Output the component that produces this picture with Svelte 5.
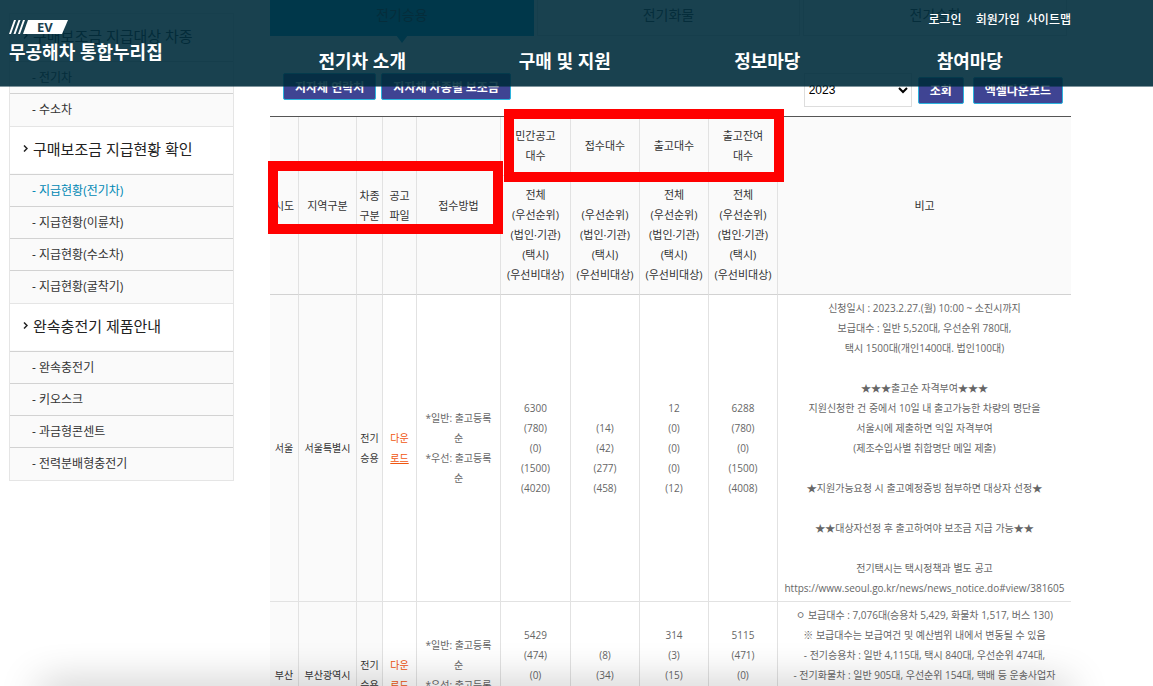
<script lang="ts">
interface MenuGroup {
    title: string;
    items: string[];
}

interface Region {
    sido: string;
    name: string;
    counts: string[][];
    notes: string[];
}

const mainMenu = ['전기차 소개', '구매 및 지원', '정보마당', '참여마당'];
const tabs = ['전기승용', '전기화물', '전기승합'];
const countHeads = [['민간공고', '대수'], ['접수대수'], ['출고대수'], ['출고잔여', '대수']];
const active = '지급현황(전기차)';

const sideMenu: MenuGroup[] = [
    { title: '구매보조금 지급대상 차종', items: ['전기차', '수소차'] },
    {
        title: '구매보조금 지급현황 확인',
        items: ['지급현황(전기차)', '지급현황(이륜차)', '지급현황(수소차)', '지급현황(굴착기)']
    },
    {
        title: '완속충전기 제품안내',
        items: ['완속충전기', '키오스크', '과금형콘센트', '전력분배형충전기']
    }
];

const regions: Region[] = [
    {
        sido: '서울',
        name: '서울특별시',
        counts: [
            ['6300', '(780)', '(0)', '(1500)', '(4020)'],
            ['', '(14)', '(42)', '(277)', '(458)'],
            ['12', '(0)', '(0)', '(0)', '(12)'],
            ['6288', '(780)', '(0)', '(1500)', '(4008)']
        ],
        notes: [
            '신청일시 : 2023.2.27.(월) 10:00 ~ 소진시까지',
            '보급대수 : 일반 5,520대, 우선순위 780대,',
            '택시 1500대(개인1400대. 법인100대)',
            '',
            '★★★출고순 자격부여★★★',
            '지원신청한 건 중에서 10일 내 출고가능한 차량의 명단을',
            '서울시에 제출하면 익일 자격부여',
            '(제조수입사별 취합명단 메일 제출)',
            '',
            '★지원가능요청 시 출고예정증빙 첨부하면 대상자 선정★',
            '',
            '★★대상자선정 후 출고하여야 보조금 지급 가능★★',
            '',
            '전기택시는 택시정책과 별도 공고',
            'https://www.seoul.go.kr/news/news_notice.do#view/381605'
        ]
    },
    {
        sido: '부산',
        name: '부산광역시',
        counts: [
            ['5429', '(474)', '(0)', '', ''],
            ['', '(8)', '(34)', '', ''],
            ['314', '(3)', '(15)', '', ''],
            ['5115', '(471)', '(0)', '', '']
        ],
        notes: [
            'ㅇ 보급대수 : 7,076대(승용차 5,429, 화물차 1,517, 버스 130)',
            '※ 보급대수는 보급여건 및 예산범위 내에서 변동될 수 있음',
            '- 전기승용차 : 일반 4,115대, 택시 840대, 우선순위 474대,',
            '- 전기화물차 : 일반 905대, 우선순위 154대, 택배 등 운송사업자',
            '',
            '',
            ''
        ]
    }
];
</script>

{#snippet lines(list: string[])}
    {#each list as line}
        <span class="line">{line}</span>
    {/each}
{/snippet}

<div class="page">
    <header class="site-header">
        <a class="logo" href="#home">
            <svg width="60" height="15" viewBox="0 0 60 15" aria-hidden="true">
                <path d="M5 0h2L2 14H0zM9.500 0h2l-5 14h-2zM14 0h2l-5 14H9z" fill="#fff" />
                <path d="M19 0h40l-6 14H14z" fill="#fff" />
                <text x="28" y="12" class="logo-ev">EV</text>
            </svg>
            <strong>무공해차 통합누리집</strong>
        </a>
        <div class="header-right">
            <ul class="util">
                <li><a href="#login">로그인</a></li>
                <li><a href="#join">회원가입</a></li>
                <li><a href="#sitemap">사이트맵</a></li>
            </ul>
            <nav class="main-nav">
                {#each mainMenu as item}
                    <a href="#menu">{item}</a>
                {/each}
            </nav>
        </div>
    </header>

    <div class="container">
        <aside class="sidebar">
            {#each sideMenu as group}
                <h3>
                    <svg width="5" height="7" viewBox="0 0 5 7" aria-hidden="true">
                        <path d="M1 0.500L4 3.500L1 6.500" fill="none" stroke="#222" stroke-width="1.500" />
                    </svg>
                    <a href="#group">{group.title}</a>
                </h3>
                <ul>
                    {#each group.items as item}
                        <li><a href="#item" class:on={item === active}>- {item}</a></li>
                    {/each}
                </ul>
            {/each}
        </aside>

        <main class="content">
            <div class="tabs">
                {#each tabs as tab, i}
                    <button type="button" class="tab" class:selected={i === 0}>{tab}</button>
                {/each}
            </div>

            <div class="toolbar">
                <div class="contacts">
                    <button type="button" class="btn">지자체 연락처</button>
                    <button type="button" class="btn">지자체 차종별 보조금</button>
                </div>
                <div class="search">
                    <select aria-label="연도">
                        <option>2023</option>
                    </select>
                    <div class="search-buttons">
                        <button type="button" class="btn">조회</button>
                        <button type="button" class="btn">엑셀다운로드</button>
                    </div>
                </div>
            </div>

            <div class="table-wrap">
                <table>
                    <colgroup>
                        <col class="c-sido" />
                        <col class="c-name" />
                        <col class="c-kind" />
                        <col class="c-file" />
                        <col class="c-method" />
                        <col class="c-total" />
                        <col class="c-count" />
                        <col class="c-count" />
                        <col class="c-count" />
                        <col />
                    </colgroup>
                    <thead>
                        <tr class="titles">
                            <th rowspan="2">시도</th>
                            <th rowspan="2">지역구분</th>
                            <th rowspan="2">{@render lines(['차종', '구분'])}</th>
                            <th rowspan="2">{@render lines(['공고', '파일'])}</th>
                            <th rowspan="2">접수방법</th>
                            {#each countHeads as head}
                                <th>{@render lines(head)}</th>
                            {/each}
                            <th rowspan="2">비고</th>
                        </tr>
                        <tr class="details">
                            {#each countHeads as head, i}
                                <th>
                                    {@render lines([i === 1 ? '' : '전체', '(우선순위)', '(법인·기관)', '(택시)', '(우선비대상)'])}
                                </th>
                            {/each}
                        </tr>
                    </thead>
                    <tbody>
                        {#each regions as region}
                            <tr>
                                <th>{region.sido}</th>
                                <th>{region.name}</th>
                                <th>{@render lines(['전기', '승용'])}</th>
                                <td>
                                    <a class="download" href="#file">다운<br /><u>로드</u></a>
                                </td>
                                <td>{@render lines(['*일반: 출고등록', '순', '*우선: 출고등록', '순'])}</td>
                                {#each region.counts as count}
                                    <td>{@render lines(count)}</td>
                                {/each}
                                <td>{@render lines(region.notes)}</td>
                            </tr>
                        {/each}
                    </tbody>
                </table>
                <div class="mark mark-left"></div>
                <div class="mark mark-counts"></div>
            </div>
        </main>
    </div>

    <div class="bottom-shade"></div>
</div>

<style>
    :global(body) {
        margin: 0;
        background: #fff;
    }

    .page {
        position: relative;
        height: 100vh;
        overflow: hidden;
        font-family: "Open Sans", "Noto Sans CJK KR", sans-serif;
        font-size: 12px;
        color: #333;
    }

    ul {
        list-style: none;
        margin: 0;
        padding: 0;
    }

    a {
        color: inherit;
        text-decoration: none;
    }

    button {
        font-family: inherit;
        cursor: pointer;
    }

    /* header */
    .site-header {
        position: absolute;
        top: 0;
        left: 0;
        right: 0;
        z-index: 10;
        display: flex;
        justify-content: space-between;
        height: 86px;
        padding: 0 82px 0 9px;
        box-sizing: border-box;
        background: rgba(0, 44, 60, 0.9);
        box-shadow: 0 1px 0 rgba(0, 44, 60, 0.5);
        color: #fff;
    }

    .logo {
        display: flex;
        flex-direction: column;
        padding-top: 20px;
    }

    .logo strong {
        font-size: 18px;
        line-height: 34px;
        white-space: nowrap;
    }

    .logo-ev {
        font-family: "Open Sans", sans-serif;
        font-size: 13px;
        font-weight: 700;
        fill: #1b414f;
    }

    .header-right {
        flex: 0 1 810px;
    }

    .util {
        display: flex;
        justify-content: flex-end;
        gap: 7px;
        padding-top: 9px;
        line-height: 22px;
        font-weight: 500;
    }

    .util li:first-child {
        margin-right: 7px;
    }

    .main-nav {
        display: flex;
        padding-top: 15px;
    }

    .main-nav a {
        flex: 1;
        font-size: 18px;
        font-weight: 700;
        line-height: 30px;
        text-align: center;
    }

    /* layout */
    .container {
        display: flex;
        gap: 36px;
        padding: 0 82px 0 9px;
    }

    /* side menu */
    .sidebar {
        flex: 0 0 225px;
        box-sizing: border-box;
        align-self: flex-start;
        margin-top: 13px;
        border: solid #e5e5e5;
        border-width: 0 1px 1px;
    }

    .sidebar h3 {
        display: flex;
        align-items: center;
        gap: 5px;
        height: 47px;
        box-sizing: border-box;
        margin: 0;
        padding: 0 0 3px 13px;
        border-top: 1px solid #e5e5e5;
        font-size: 15px;
        font-weight: 400;
        color: #222;
    }

    .sidebar ul {
        padding: 1px 0;
        background: #fafafa;
    }

    .sidebar li {
        padding-left: 22px;
        border-top: 1px solid #d2d2d2;
        line-height: 31px;
    }

    .sidebar .on {
        color: #0088b4;
    }

    /* content */
    .content {
        flex: 1;
        min-width: 0;
    }

    .tabs {
        display: flex;
        gap: 3px;
        padding-right: 4px;
    }

    .tab {
        position: relative;
        flex: 1;
        height: 36px;
        padding: 0 0 8px;
        border: 1px solid #ddd;
        border-top: 0;
        background: #fff;
        font-size: 14px;
        color: #333;
    }

    .tab.selected {
        border-color: #0096c8;
        background: #0096c8;
    }

    .tab.selected::after {
        content: "";
        position: absolute;
        top: 100%;
        left: 50%;
        margin-left: -6px;
        border: 6px solid transparent;
        border-top: 8px solid #0096c8;
    }

    .toolbar {
        display: flex;
        justify-content: space-between;
        padding: 37px 8px 9px 13px;
    }

    .contacts {
        display: flex;
        align-items: flex-start;
        gap: 5px;
    }

    .search {
        display: flex;
        align-items: center;
        gap: 6px;
    }

    .search-buttons {
        display: flex;
        gap: 9px;
    }

    .btn {
        height: 27px;
        padding: 0 11px;
        border: 1px solid #2bb3dd;
        border-radius: 2px;
        background: #3f4493;
        font-size: 12px;
        font-weight: 700;
        color: #fff;
        white-space: nowrap;
    }

    select {
        width: 108px;
        height: 34px;
        border: 1px solid #ddd;
        background: #fff;
        font-family: "Liberation Sans", Arial, sans-serif;
        font-size: 12px;
        color: #000;
    }

    /* status table */
    .table-wrap {
        position: relative;
    }

    table {
        width: 100%;
        table-layout: fixed;
        border-collapse: separate;
        border-spacing: 0;
        border-top: 1px solid #555;
        font-size: 10px;
        line-height: 20px;
        text-align: center;
    }

    .c-sido { width: 29px; }
    .c-name { width: 58px; }
    .c-kind { width: 26px; }
    .c-file { width: 34px; }
    .c-method { width: 84px; }
    .c-total { width: 70px; }
    .c-count { width: 69px; }

    th, td {
        padding: 3px 0;
        border: solid #e2e2e2;
        border-width: 0 1px 1px 0;
        font-weight: 400;
        white-space: nowrap;
    }

    th {
        background: #fafafa;
        color: #333;
    }

    td {
        color: #666;
    }

    thead th {
        font-size: 11px;
    }

    .titles th {
        height: 52px;
    }

    .details th {
        height: 112px;
    }

    .titles th[rowspan],
    .details th {
        border-bottom-color: #d2d2d2;
    }

    .titles th:last-child,
    tbody td:last-child {
        border-right: 0;
    }

    .line {
        display: block;
        min-height: 20px;
    }

    .download {
        color: #f0560f;
    }

    /* highlight frames over the header cells */
    .mark {
        position: absolute;
        box-sizing: border-box;
        height: 73px;
        border: 10px solid #f00;
    }

    .mark-left {
        top: 45px;
        left: -2px;
        width: 235px;
    }

    .mark-counts {
        top: -7px;
        left: 234px;
        width: 280px;
    }

    .bottom-shade {
        position: absolute;
        left: 40px;
        right: 84px;
        bottom: -20px;
        height: 20px;
        box-shadow: 0 0 40px rgba(0, 0, 0, 0.3);
        pointer-events: none;
    }
</style>
